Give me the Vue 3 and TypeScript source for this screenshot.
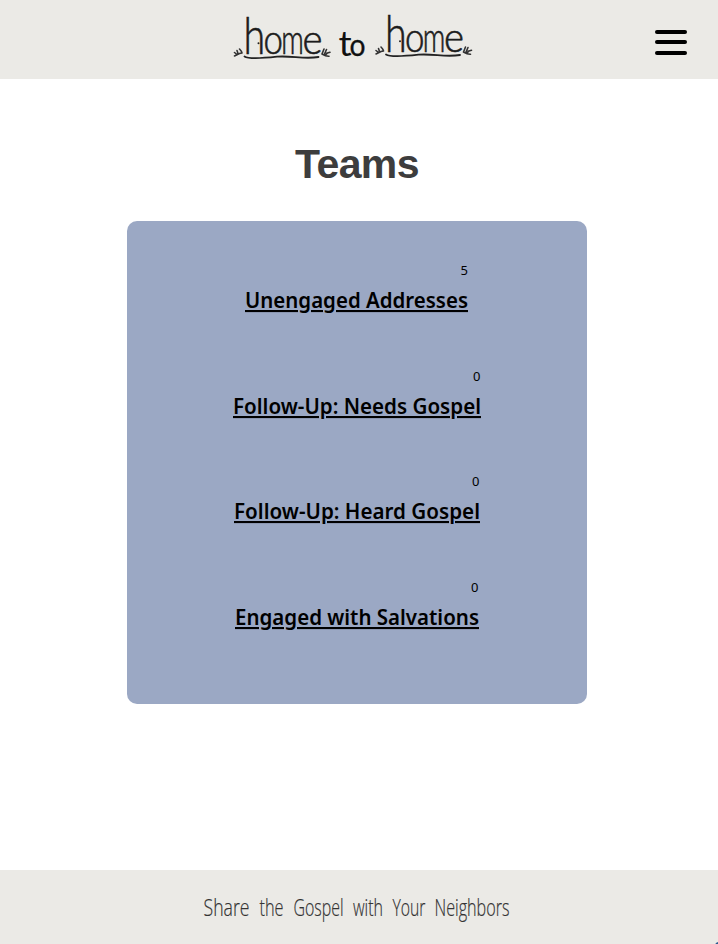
<script setup lang="ts">
interface Team { label: string; count: number; width: number }
const teams: Team[] = [
  { label: 'Unengaged Addresses', count: 5, width: 223 },
  { label: 'Follow-Up: Needs Gospel', count: 0, width: 248 },
  { label: 'Follow-Up: Heard Gospel', count: 0, width: 246 },
  { label: 'Engaged with Salvations', count: 0, width: 244 },
]
const motto = [
  { word: 'Share', x: 2.5, width: 46 },
  { word: 'the', x: 58.5, width: 24 },
  { word: 'Gospel', x: 92.5, width: 50 },
  { word: 'with', x: 152, width: 30 },
  { word: 'Your', x: 191.5, width: 33 },
  { word: 'Neighbors', x: 233.5, width: 75 },
]
const houses = [{ x: 0, y: 0 }, { x: 141.5, y: -2 }]
</script>

<template>
  <div class="page">
    <header class="header">
      <svg class="logo" width="250" height="70" viewBox="230 0 250 70">
        <g v-for="h in houses" :key="h.x" :transform="`translate(${h.x} ${h.y})`">
          <text class="tall" transform="translate(243.6 53.5) scale(.76 1)">h</text>
          <text class="letter" y="53.500" x="263.4" textLength="19.5" lengthAdjust="spacingAndGlyphs">o</text>
          <text class="letter" y="53.500" x="281.2" textLength="22.6" lengthAdjust="spacingAndGlyphs">m</text>
          <text class="letter" y="53.500" x="302.6" textLength="20" lengthAdjust="spacingAndGlyphs">e</text>
          <circle cx="258.5" cy="43.3" r="1" fill="#222" />
          <path class="ground" d="M244.5 56.5C249 59.5 265 58 277 56.7C292 55.5 304 59.5 318.500 57" />
          <path class="sprig" d="M234.500 52.500l2.500 2M234.500 56l5-2.500l2.500-.5M237 50.500l1 3M239.500 49q2 2 2.500 4M322 54l2-5M324.500 54l2-4.500M322 54q4 2.500 7 2.300M326.500 53.200l3.500-1M325.500 55l2-2" />
        </g>
        <text class="to" x="338.5" y="56" textLength="13.2" lengthAdjust="spacingAndGlyphs">t</text>
        <text class="o" x="349.5" y="56" textLength="16" lengthAdjust="spacingAndGlyphs">o</text>
      </svg>
      <button class="menu" aria-label="Menu"><i></i><i></i><i></i></button>
    </header>
    <main class="main">
      <h1>Teams</h1>
      <section class="card">
        <div v-for="team in teams" :key="team.label" class="team" :style="{ width: team.width + 'px' }">
          <span class="count">{{ team.count }}</span>
          <svg class="link" :width="team.width" height="30">
            <text x="0" y="21" :textLength="team.width" lengthAdjust="spacingAndGlyphs">{{ team.label }}</text>
          </svg>
        </div>
      </section>
    </main>
    <footer class="footer">
      <svg class="motto" width="312" height="50">
        <text v-for="m in motto" :key="m.word" :x="m.x" y="33.5" :textLength="m.width" lengthAdjust="spacingAndGlyphs">{{ m.word }}</text>
      </svg>
      <span class="corner"></span>
    </footer>
  </div>
</template>

<style>
body { background: #fff; }
</style>
<style scoped>
.page { width: 718px; height: 944px; display: flex; flex-direction: column; overflow: hidden; color: #000; }
.header { height: 79px; flex: none; background: #ebeae6; display: flex; justify-content: space-between; padding: 0 31px 0 230px; box-sizing: border-box; }
.logo { overflow: visible; }
.tall, .letter { font-family: Lato, sans-serif; font-weight: 300; fill: #1c1c1c; stroke: #1c1c1c; stroke-width: .65; }
.tall { font-size: 52px; }
.letter { font-size: 41px; }
.to, .o { font-family: Lato, sans-serif; font-weight: 400; fill: #111; stroke: #111; }
.to { font-size: 34px; stroke-width: 0; }
.o { font-size: 31px; stroke-width: .3; }
.ground { fill: none; stroke: #222; stroke-width: 1.8; stroke-linecap: round; }
.sprig { fill: none; stroke: #333; stroke-width: 1.6; stroke-linecap: round; }
.menu { border: 0; padding: 0; background: none; width: 32px; height: 25px; margin-top: 30px; display: flex; flex-direction: column; }
.menu i { height: 4px; width: 32px; border-radius: 2px; background: #000; }
.menu i:nth-child(2) { margin: 6px 0 7px; }
.main { flex: 1; display: flex; flex-direction: column; align-items: center; padding-right: 4px; }
h1 { margin: 60px 0 0; height: 82px; font: bold 41px/50px "Liberation Sans", sans-serif; letter-spacing: -.6px; color: #3d3d3d; }
.card { width: 460px; height: 483px; box-sizing: border-box; border-radius: 10px; background: #9ba8c4; padding-top: 39px; display: flex; flex-direction: column; align-items: center; }
.team { height: 105.7px; display: flex; flex-direction: column; margin-right: 1px; }
.count { align-self: flex-end; height: 27px; font: 13px/20px "Noto Sans", sans-serif; }
.link { overflow: visible; display: block; }
.link text { font: 600 21px "Noto Sans", sans-serif; text-decoration: underline; text-decoration-thickness: 2px; text-underline-offset: 0.5px; }
.footer { height: 74px; flex: none; background: #ebeae6; display: flex; justify-content: center; align-items: center; position: relative; padding-right: 4px; box-sizing: border-box; }
.motto { overflow: visible; }
.motto text { font: 300 23px "Open Sans", sans-serif; fill: #333; stroke: #333; stroke-width: .2; }
.corner { position: absolute; right: -1px; bottom: -2px; width: 4px; height: 4px; border-radius: 4px 0 0; background: #2d5d91; }
</style>
